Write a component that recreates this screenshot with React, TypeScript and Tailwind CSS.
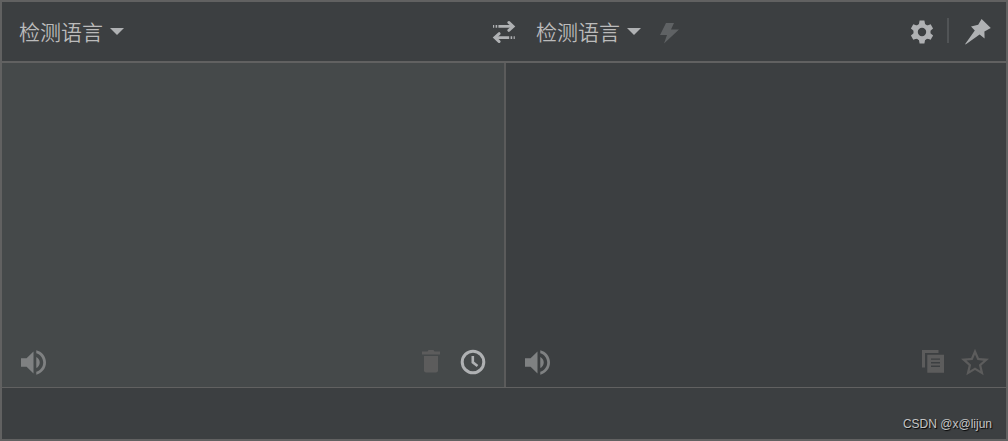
import { useState } from 'react';
import type { ReactNode } from 'react';

const LANGUAGES = ['检测语言'];

const CaretIcon = () => (
  <svg className="pointer-events-none h-[7px] w-[14px]" viewBox="0 0 14 7">
    <path d="M0 0h14L7 7z" fill="currentColor" />
  </svg>
);

const SwapIcon = () => (
  <svg className="size-6" viewBox="0 0 24 24" fill="none" stroke="currentColor" strokeWidth="2.6">
    <path d="M1 6.4h1.2M3.6 6.4h1.6M6.4 6.4H20" />
    <path d="M16.8 2.4l4.4 4-4.4 4" strokeWidth="2.8" strokeLinecap="round" />
    <path d="M22.8 17.6h-1.2M20.2 17.6h-1.6M17.2 17.6H4" />
    <path d="M7.2 13.6l-4.4 4 4.4 4" strokeWidth="2.8" strokeLinecap="round" />
  </svg>
);

const BoltIcon = () => (
  <svg className="size-6" viewBox="0 0 24 24">
    <path d="M9 3h8l-3 6.5h8L7 23.5l3-8.5H3z" fill="currentColor" />
  </svg>
);

const GearIcon = () => (
  <svg className="size-6" viewBox="0 0 24 24" fill="currentColor">
    <circle cx="12" cy="12" r="6.4" fill="none" stroke="currentColor" strokeWidth="4.4" />
    {[0, 60, 120, 180, 240, 300].map((angle) => (
      <path key={angle} d="M9.6.6h4.8l.8 4.2v2H8.8v-2z" transform={`rotate(${angle} 12 12)`} />
    ))}
  </svg>
);

const PinIcon = () => (
  <svg className="size-8" viewBox="0 0 32 32">
    <path
      d="M19.6 3l9.2 8.9-6.4 3.5.2 7-5-3.8L3.6 28.6 3.2 28l9.6-13.5L9 10.4l7.2-1.6z"
      fill="currentColor"
    />
  </svg>
);

const SpeakerIcon = () => (
  <svg className="size-[25px]" viewBox="3 3 18 18">
    <path
      d="M3 9v6h4l5 5V4L7 9H3zm13.5 3c0-1.77-1.02-3.29-2.5-4.03v8.05c1.48-.73 2.5-2.25 2.5-4.02zM14 3.23v2.06c2.89.86 5 3.54 5 6.71s-2.11 5.85-5 6.71v2.06c4.01-.91 7-4.49 7-8.77s-2.99-7.86-7-8.77z"
      fill="currentColor"
    />
  </svg>
);

const TrashIcon = () => (
  <svg className="size-6" viewBox="0 0 24 24" fill="currentColor">
    <path d="M3 1.5h5.5l1-1.5h5l1 1.5H21v3H3z" />
    <path d="M5 6h14v14.5a2 2 0 0 1-2 2H7a2 2 0 0 1-2-2z" />
  </svg>
);

const ClockIcon = () => (
  <svg className="size-[26px]" viewBox="0 0 26 26" fill="none" stroke="currentColor">
    <circle cx="13" cy="13" r="10.8" strokeWidth="3" />
    <path d="M12.8 7v6.4l4.7 3.6" strokeWidth="2.6" />
  </svg>
);

const CopyIcon = () => (
  <svg className="size-6" viewBox="0 0 24 24" fill="currentColor">
    <path d="M1 0h16.5v3H4v14.5H1z" />
    <path
      fillRule="evenodd"
      d="M6.3 4.8H23v18H6.3zM10 8.4v1.4h9V8.4zM10 12v1.4h9V12zM10 15.6V17h9v-1.4z"
    />
  </svg>
);

const StarIcon = () => (
  <svg className="size-7" viewBox="2 1.5 20 20">
    <path
      d="M22 9.24l-7.19-.62L12 2 9.19 8.63 2 9.24l5.46 4.73L5.82 21 12 17.27 18.18 21l-1.63-7.03L22 9.24zM12 15.4l-3.76 2.27 1-4.28-3.32-2.88 4.38-.38L12 6.1l1.71 4.04 4.38.38-3.32 2.88 1 4.28L12 15.4z"
      fill="currentColor"
    />
  </svg>
);

const LanguageSelect = ({ label }: { label: string }) => (
  <label className="flex items-center gap-[7px] text-[#afb1b3]">
    <select
      aria-label={label}
      className="appearance-none bg-transparent pt-[2px] text-[21px] font-[350] text-[#bbbbbb] outline-none">
      {LANGUAGES.map((language) => (
        <option key={language}>{language}</option>
      ))}
    </select>
    <CaretIcon />
  </label>
);

type IconButtonProps = {
  label: string;
  className?: string;
  disabled?: boolean;
  onClick?: () => void;
  children: ReactNode;
};

const IconButton = ({ label, className, disabled, onClick, children }: IconButtonProps) => (
  <button type="button" aria-label={label} disabled={disabled} onClick={onClick} className={className}>
    {children}
  </button>
);

export default function App() {
  const [text, setText] = useState('');

  return (
    <div className="flex min-h-screen flex-col border-2 border-[#616161] bg-[#3c3f41] font-['Liberation_Sans','Noto_Sans_CJK_SC',sans-serif]">
      <header className="grid h-[61px] grid-cols-[1fr_auto_1fr] items-center border-b-2 border-[#616161]">
        <div className="flex pl-[17px]">
          <LanguageSelect label="源语言" />
        </div>
        <IconButton label="交换语言" className="text-[#afb1b3]">
          <SwapIcon />
        </IconButton>
        <div className="flex items-center pr-3 pl-5">
          <LanguageSelect label="目标语言" />
          <IconButton label="立即翻译" disabled className="ml-4 text-[#5f6264]">
            <BoltIcon />
          </IconButton>
          <div className="ml-auto flex items-center gap-[13px] text-[#afb1b3]">
            <IconButton label="设置">
              <GearIcon />
            </IconButton>
            <div className="mb-[2px] h-[25px] w-[2px] bg-[#515456]" />
            <IconButton label="固定">
              <PinIcon />
            </IconButton>
          </div>
        </div>
      </header>

      <main className="grid flex-1 grid-cols-2">
        <section className="flex flex-col bg-[#45494a]">
          <textarea
            aria-label="原文"
            value={text}
            onChange={(e) => setText(e.target.value)}
            className="flex-1 resize-none px-[17px] py-3 text-[#bbbbbb] outline-none"
          />
          <div className="flex h-[50px] items-center pr-[18px] pl-[19px]">
            <IconButton label="朗读原文" className="text-[#7f8182]">
              <SpeakerIcon />
            </IconButton>
            <div className="ml-auto flex items-center gap-[17px]">
              <IconButton label="清空" disabled={!text} className="text-[#5c5c5c]" onClick={() => setText('')}>
                <TrashIcon />
              </IconButton>
              <IconButton label="历史记录" className="text-[#afb1b3]">
                <ClockIcon />
              </IconButton>
            </div>
          </div>
        </section>

        <section className="flex flex-col border-l-2 border-[#5b5b5b]">
          <textarea
            aria-label="译文"
            readOnly
            className="flex-1 resize-none px-[17px] py-3 text-[#bbbbbb] outline-none"
          />
          <div className="flex h-[50px] items-center pr-[17px] pl-[19px]">
            <IconButton label="朗读译文" className="text-[#7f8182]">
              <SpeakerIcon />
            </IconButton>
            <div className="ml-auto flex items-center gap-4 text-[#5c5c5c]">
              <IconButton label="复制" disabled>
                <CopyIcon />
              </IconButton>
              <IconButton label="收藏" disabled>
                <StarIcon />
              </IconButton>
            </div>
          </div>
        </section>
      </main>

      <footer className="flex h-[52px] items-end justify-end border-t border-[#616161] pr-[14px] pb-[7px] text-xs text-[#c4c4c4] text-shadow-[1px_1px_1px_#000000]">
        CSDN @x@lijun
      </footer>
    </div>
  );
}
